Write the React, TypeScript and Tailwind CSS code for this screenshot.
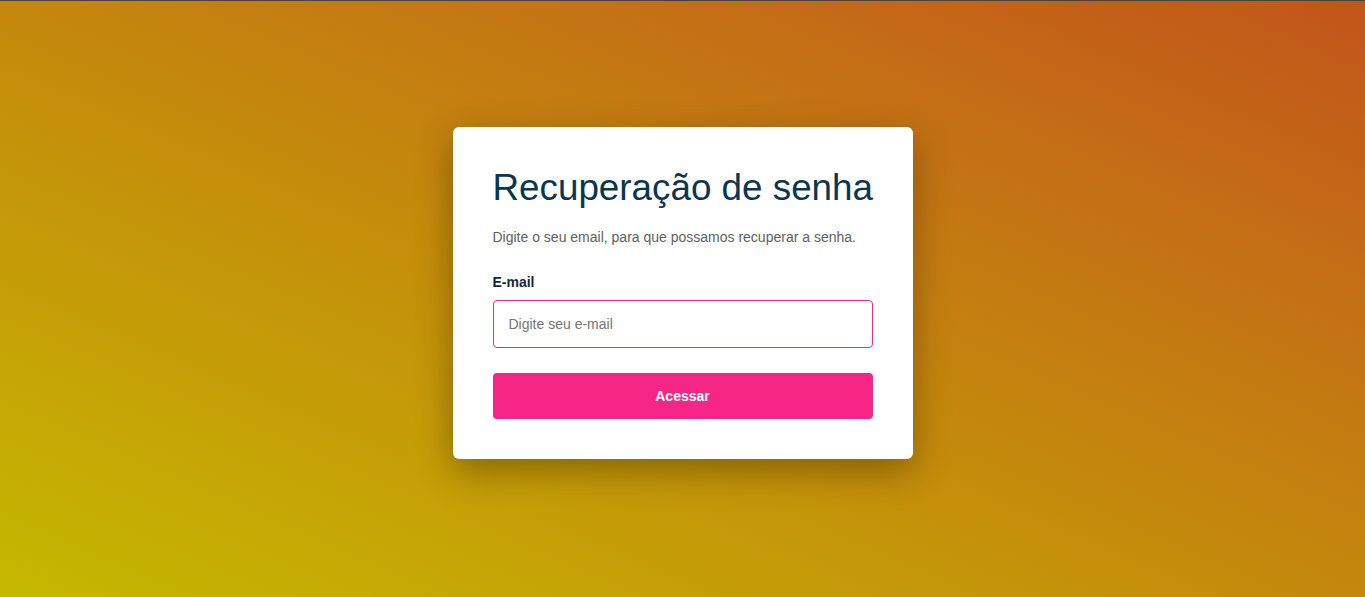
export default function App() {
  return (
    <div className="min-h-screen w-full border-t border-[#444444] bg-gradient-to-tr from-[#c5b800] via-[#c4880c] to-[#c2541a] flex justify-center pt-[126px]" style={{ fontFamily: '"Liberation Sans", Arial, sans-serif' }}>
      <div className="w-[460px] h-[332px] bg-white rounded-md px-10 pt-10 pb-10 shadow-[0_12px_36px_rgba(60,40,0,0.45)]">
        <h1 className="text-[36.8px] leading-[42px] whitespace-nowrap text-[#0b3650] font-normal">Recuperação de senha</h1>
        <p className="mt-[18px] text-[14px] leading-5 text-[#5f5f5f]">Digite o seu email, para que possamos recuperar a senha.</p>
        <label className="block mt-[27px] text-[14px] leading-4 font-bold text-[#10293a]">E-mail</label>
        <input className="block mt-[10px] w-full h-[48px] border border-[#f72585] rounded-[4px] pl-[15px] pr-4 text-[14px] text-[#333] placeholder:text-[#757575] outline-none" placeholder="Digite seu e-mail" />
        <button className="mt-[25px] w-full h-[46px] bg-[#f72585] rounded-[4px] text-white text-[14px] font-bold">Acessar</button>
      </div>
    </div>
  );
}
